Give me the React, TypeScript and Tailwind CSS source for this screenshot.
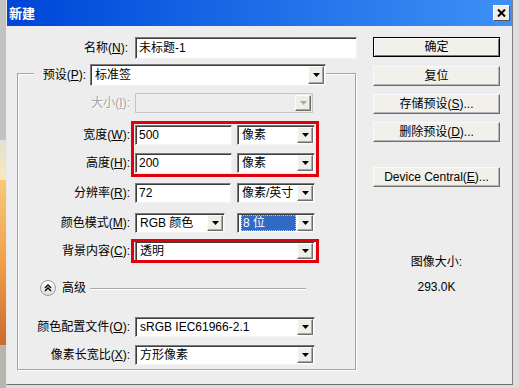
import React from "react";

const sunken =
  "bg-white border border-t-[#7c7c7c] border-l-[#7c7c7c] border-r-[#f3f3f3] border-b-[#f3f3f3] shadow-[inset_1px_1px_0_#3c3c3c]";

function U({ c }: { c: string }) {
  return <span className="underline underline-offset-[1px]">{c}</span>;
}

function Arrow({ disabled }: { disabled?: boolean }) {
  return (
    <div className="w-[16px] h-full shrink-0 flex items-center justify-center bg-[#efeee8] border border-t-[#fdfdfd] border-l-[#fdfdfd] border-r-[#6e6e6e] border-b-[#6e6e6e] shadow-[inset_-1px_-1px_0_#a9a9a9]">
      <svg width="7" height="4" viewBox="0 0 7 4">
        <polygon points="0,0 7,0 3.5,4" fill={disabled ? "#a8a8a8" : "#000"} />
      </svg>
    </div>
  );
}

function Select({
  className,
  text,
  disabled,
  selected,
}: {
  className: string;
  text?: string;
  disabled?: boolean;
  selected?: boolean;
}) {
  return (
    <div
      className={`flex p-[1px] pl-0 ${className} ${
        disabled ? "bg-[#ededed] border border-[#c6c6c6]" : sunken
      }`}
    >
      <div className="flex-1 flex items-center pl-[3px] min-w-0">
        {selected ? (
          <div className="w-full h-[16px] flex items-center pl-[2px] bg-[#316ac5] text-white outline outline-dotted outline-[#e6c96a] -outline-offset-1 mr-[1px]">
            {text}
          </div>
        ) : (
          <span className="pl-[1px] whitespace-nowrap">{text}</span>
        )}
      </div>
      <Arrow disabled={disabled} />
    </div>
  );
}

function TextBox({ className, text }: { className: string; text: string }) {
  return (
    <div className={`h-[20px] flex items-center pl-[3px] ${sunken} ${className}`}>
      {text}
    </div>
  );
}

function Label({ children, gray }: { children: React.ReactNode; gray?: boolean }) {
  return (
    <div
      className={`w-[113px] shrink-0 text-right pr-[1px] whitespace-nowrap ${
        gray ? "text-[#a3a3a3] [text-shadow:1px_1px_0_#fff]" : "text-black"
      }`}
    >
      {children}
    </div>
  );
}

function Row({ mt, children }: { mt: string; children: React.ReactNode }) {
  return <div className={`flex items-center h-[20px] ${mt}`}>{children}</div>;
}

function Btn({ children, def, mt }: { children: React.ReactNode; def?: boolean; mt: string }) {
  return (
    <div
      className={`h-[20px] w-[127px] flex items-center justify-center bg-[#f1f0ea] border ${
        def
          ? "border-black shadow-[inset_1px_1px_0_#fff,inset_-1px_-1px_0_#7a7a7a]"
          : "border-t-[#fafafa] border-l-[#fafafa] border-r-[#6f6f6f] border-b-[#6f6f6f] shadow-[inset_-1px_-1px_0_#b5b5b5]"
      } ${mt}`}
    >
      {children}
    </div>
  );
}

export default function App() {
  return (
    <div className="w-[519px] h-[388px] flex bg-[#dedede] overflow-hidden text-[12px] leading-[14px] font-['Liberation_Sans','Noto_Sans_CJK_SC',sans-serif]">
      {/* desktop strip behind the dialog */}
      <div className="w-[6px] flex flex-col">
        <div className="h-[140px] bg-[#c2c2c2]" />
        <div className="h-[40px] bg-linear-to-b from-[#e4e0d4] to-[#fbe8b8]" />
        <div className="h-[165px] bg-linear-to-b from-[#f8c878] via-[#f0a048] to-[#cc6a30]" />
        <div className="flex-1 bg-[#b8b4ae]" />
      </div>

      <div className="w-[507px] h-[385px] flex flex-col border-l border-l-[#e8e8e8] border-r border-r-[#7f7f7f] border-b border-b-[#6f6f6f]">
        {/* title bar */}
        <div className="h-[26px] shrink-0 flex items-center justify-between pl-[2px] pr-[2px] bg-linear-to-r from-[#0044d8] to-[#3f90f6]">
          <span className="text-white font-bold text-[13px] font-['Noto_Sans_CJK_SC',sans-serif]">新建</span>
          <div className="w-[17px] h-[16px] flex items-center justify-center bg-[#eeede6] border border-t-[#ffffff] border-l-[#ffffff] border-r-[#555] border-b-[#555]">
            <svg width="9" height="8" viewBox="0 0 9 8">
              <path d="M1 0.5 L8 7.5 M8 0.5 L1 7.5" stroke="#000" strokeWidth="2" />
            </svg>
          </div>
        </div>

        {/* body */}
        <div className="flex-1 flex bg-[#ededed] pl-[10px]">
          {/* left column */}
          <div className="w-[340px] flex flex-col">
            <div className="flex items-center h-[22px] mt-[11px]">
              <div className="w-[111px] text-right">
                名称(<U c="N" />):
              </div>
              <TextBox className="ml-[7px] w-[222px] h-[22px]" text="未标题-1" />
            </div>

            <div className="relative mt-[14px] w-[339px] border border-[#a2a2a2] shadow-[inset_1px_1px_0_#fff,1px_1px_0_#fff] pb-[4px]">
              {/* preset legend row */}
              <div className="flex items-center h-[22px] -mt-[10px]">
                <div className="ml-[16px] w-[56px] h-full flex items-center justify-end pr-[4px] bg-[#ededed]">
                  预设(<U c="P" />):
                </div>
                <Select className="w-[236px] h-[22px]" text="标准签" />
              </div>

              <Row mt="mt-[7px]">
                <Label gray>
                  大小(<U c="I" />):
                </Label>
                <Select className="ml-[4px] w-[178px] h-[20px]" disabled />
              </Row>

              <Row mt="mt-[12px]">
                <Label>
                  宽度(<U c="W" />):
                </Label>
                <TextBox className="ml-[4px] w-[97px]" text="500" />
                <Select className="ml-[5px] w-[78px] h-[20px]" text="像素" />
              </Row>

              <Row mt="mt-[8px]">
                <Label>
                  高度(<U c="H" />):
                </Label>
                <TextBox className="ml-[4px] w-[97px]" text="200" />
                <Select className="ml-[5px] w-[78px] h-[20px]" text="像素" />
              </Row>

              <Row mt="mt-[10px]">
                <Label>
                  分辨率(<U c="R" />):
                </Label>
                <TextBox className="ml-[4px] w-[96px]" text="72" />
                <Select className="ml-[6px] w-[78px] h-[20px]" text="像素/英寸" />
              </Row>

              <Row mt="mt-[10px]">
                <Label>
                  颜色模式(<U c="M" />):
                </Label>
                <Select className="ml-[4px] w-[90px] h-[20px]" text="RGB 颜色" />
                <Select className="ml-[12px] w-[78px] h-[20px]" text="8 位" selected />
              </Row>

              <Row mt="mt-[8px]">
                <Label>
                  背景内容(<U c="C" />):
                </Label>
                <Select className="ml-[4px] w-[180px] h-[20px]" text="透明" />
              </Row>

              {/* advanced */}
              <div className="flex items-center h-[16px] mt-[19px]">
                <div className="ml-[22px] w-[16px] h-[16px] rounded-full border border-[#9a9a9a] bg-linear-to-b from-[#ffffff] to-[#dcdcdc] flex items-center justify-center">
                  <svg width="8" height="8" viewBox="0 0 8 8">
                    <path d="M1 4 L4 1 L7 4 M1 7 L4 4 L7 7" stroke="#000" strokeWidth="1.4" fill="none" />
                  </svg>
                </div>
                <span className="ml-[6px]">高级</span>
                <div className="flex-1 ml-[4px] mr-[49px] border-t border-[#a8a8a8] shadow-[0_1px_0_#fff]" />
              </div>

              <Row mt="mt-[21px]">
                <Label>
                  颜色配置文件(<U c="O" />):
                </Label>
                <Select className="ml-[4px] w-[180px] h-[20px]" text="sRGB IEC61966-2.1" />
              </Row>

              <Row mt="mt-[8px]">
                <Label>
                  像素长宽比(<U c="X" />):
                </Label>
                <Select className="ml-[4px] w-[180px] h-[20px]" text="方形像素" />
              </Row>

              {/* red annotation boxes */}
              <div className="absolute left-[113px] top-[47px] w-[188px] h-[56px] border-[3px] border-[#e4000b]" />
              <div className="absolute left-[113px] top-[165px] w-[188px] h-[24px] border-[3px] border-[#e4000b]" />
            </div>
          </div>

          {/* right column */}
          <div className="w-[127px] ml-[16px] flex flex-col items-center">
            <Btn def mt="mt-[11px]">确定</Btn>
            <Btn mt="mt-[9px]">复位</Btn>
            <Btn mt="mt-[8px]">
              存储预设(<U c="S" />)...
            </Btn>
            <Btn mt="mt-[8px]">
              删除预设(<U c="D" />)...
            </Btn>
            <Btn mt="mt-[25px]">
              Device Central(<U c="E" />)...
            </Btn>
            <div className="mt-[68px]">图像大小:</div>
            <div className="mt-[11px]">293.0K</div>
          </div>
        </div>
      </div>
    </div>
  );
}
